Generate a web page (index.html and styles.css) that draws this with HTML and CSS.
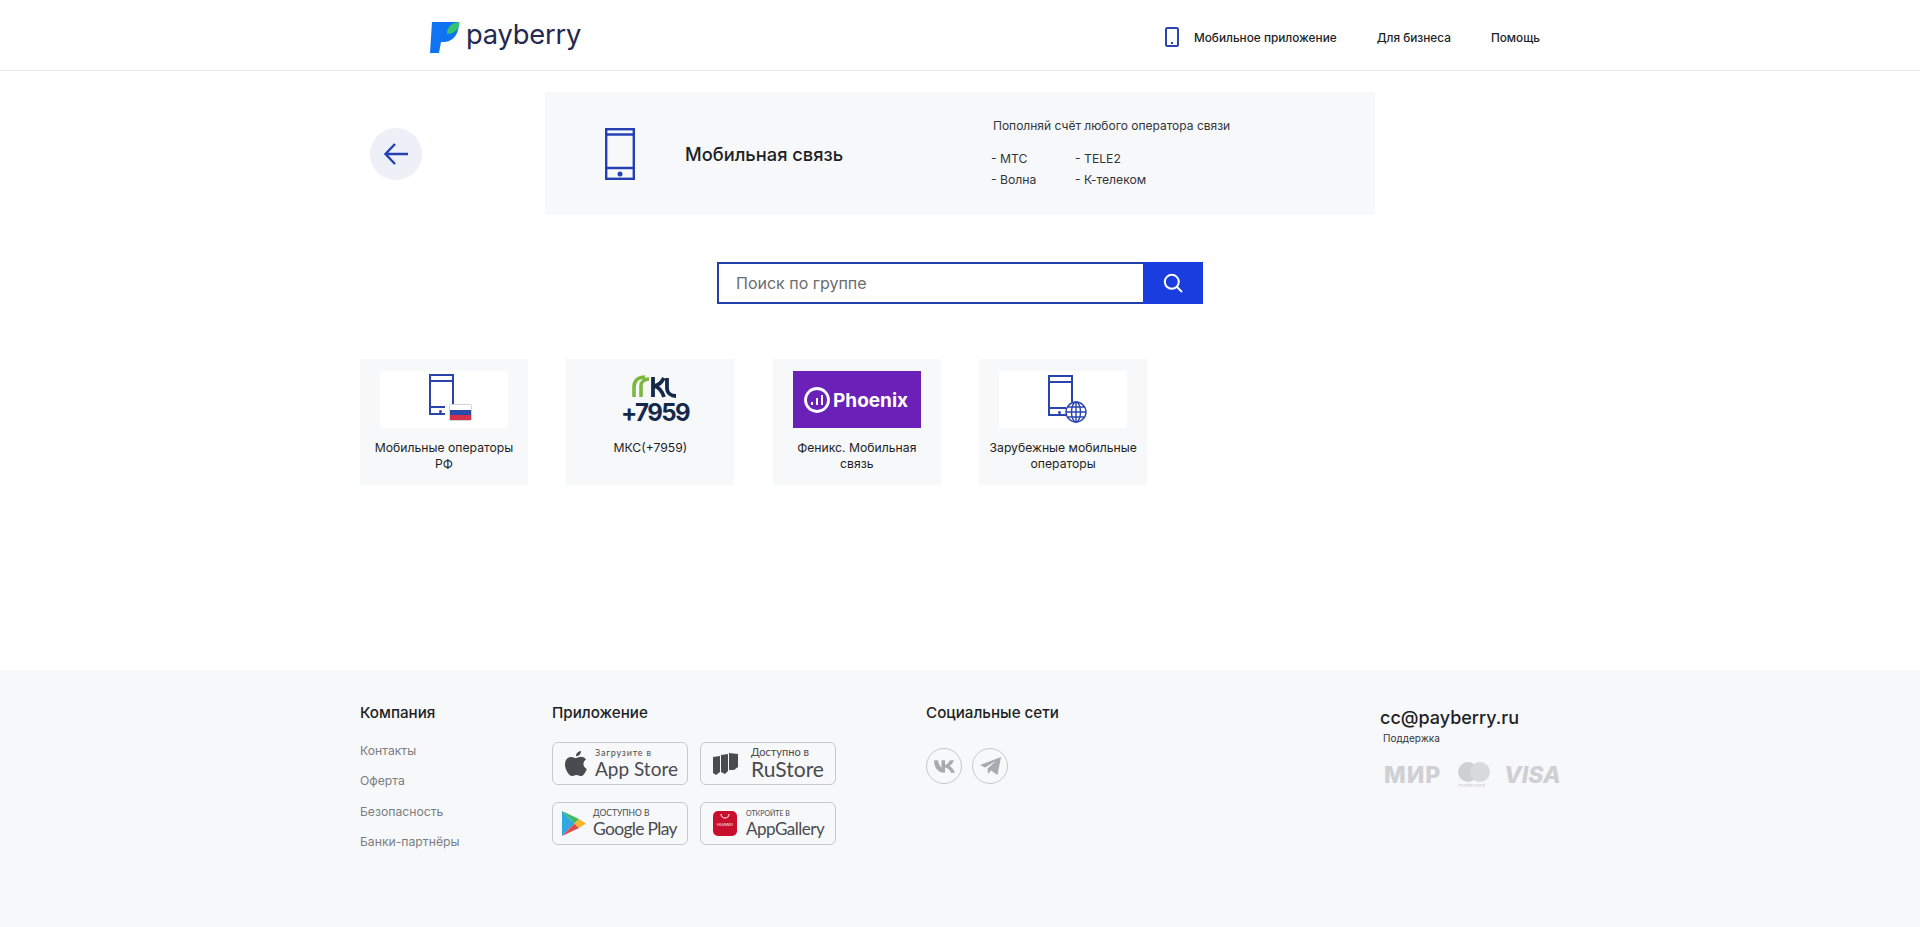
FILE: index.html
```html
<!DOCTYPE html>
<html lang="ru">
<head>
<meta charset="utf-8">
<title>Payberry</title>
<link rel="stylesheet" href="styles.css">
</head>
<body>
<header class="header">
  <div class="wrap header-row">
    <a class="logo">
      <svg class="logo-mark" viewBox="0 0 30 31" width="30" height="31">
        <path d="M2 0H29C29 10 25 19 15 20H11L9 31H0Z" fill="#0f74f2"/>
        <path d="M17 12C17 5 21 1 29.500 0C29.500 6 25 12 17 12Z" fill="#35c46f"/>
      </svg>
      <span class="logo-text">payberry</span>
    </a>
    <nav class="nav">
      <a class="nav-app">
        <svg width="14" height="20" viewBox="0 0 14 20"><rect x="1" y="1" width="12" height="18" rx="1.500" class="ln"/><rect x="6" y="15" width="2" height="2" class="dot"/></svg>
        Мобильное приложение
      </a>
      <a>Для бизнеса</a>
      <a>Помощь</a>
    </nav>
  </div>
</header>

<main class="wrap main">
  <section class="top">
    <a class="back">
      <svg width="26" height="24" viewBox="0 0 26 24"><path d="M25 12H3M12 2 2.500 12l9.500 10" class="ln-b"/></svg>
    </a>
    <div class="banner">
      <svg class="banner-icon" width="30" height="52" viewBox="0 0 30 52"><rect x="1.200" y="1.200" width="27.600" height="49.600" class="ln-b"/><path d="M1 6.500H29M1 40H29" class="ln-b"/><rect x="12.500" y="43.500" width="5" height="5" rx="2.500" class="dot"/></svg>
      <h1 class="banner-title">Мобильная связь</h1>
      <div class="banner-info">
        <p class="banner-lead">Пополняй счёт любого оператора связи</p>
        <ul class="banner-list">
          <li>- МТС</li><li>- TELE2</li><li>- Волна</li><li>- К-телеком</li>
        </ul>
      </div>
    </div>
  </section>

  <form class="search">
    <div class="search-field">Поиск по группе</div>
    <div class="search-btn">
      <svg width="20" height="20" viewBox="0 0 20 20"><circle cx="8.800" cy="8.800" r="7" class="ln-w"/><path d="m14 14 5 5" class="ln-w"/></svg>
    </div>
  </form>

  <section class="cards">
    <a class="card">
      <svg class="card-img" viewBox="1 0 128 57">
        <rect x="1" width="128" height="57" fill="#fff"/>
        <path d="M66 43H51V4H74V33M51 10H74M51 36H66" class="ln"/>
        <rect x="60" y="39" width="3" height="3" rx="1.500" class="dot"/>
        <rect x="70" y="33" width="23" height="17" rx="2" fill="#d4d4d6"/>
        <rect x="71" y="34" width="21" height="5" fill="#fff"/>
        <rect x="71" y="39" width="21" height="5" fill="#2a4aa8"/>
        <rect x="71" y="44" width="21" height="5" fill="#d5304a"/>
      </svg>
      <span class="card-name">Мобильные операторы РФ</span>
    </a>
    <a class="card">
      <svg class="card-img" viewBox="1 0 128 57">
        <path d="M49 26V16C49 9 54 6 60 6M56 26V15C56 11 59 8 64 8" fill="none" stroke="#7cb83f" stroke-width="3.600"/>
        <path d="M68 6V26M79 7C76 12 74 14 69 15C74 16 77 20 79 26M91 25C86 25 82 22 82 17V7" fill="none" stroke="#14294a" stroke-width="3.800"/>
        <text class="mks-num" x="70" y="50">+7959</text>
      </svg>
      <span class="card-name">МКС(+7959)</span>
    </a>
    <a class="card">
      <svg class="card-img" viewBox="1 0 128 57">
        <rect x="1" width="128" height="57" fill="#6b21b8"/>
        <circle cx="25" cy="29" r="11.500" fill="none" stroke="#fff" stroke-width="2.800"/>
        <path d="M20 31V34M25 27V34M30 24V34" stroke="#fff" stroke-width="2"/>
        <text class="phx" x="41" y="36">Phoenix</text>
      </svg>
      <span class="card-name">Феникс. Мобильная связь</span>
    </a>
    <a class="card">
      <svg class="card-img" viewBox="1 0 128 57">
        <rect x="1" width="128" height="57" fill="#fff"/>
        <path d="M68 44H51V5H74V31M51 11H74M51 37H68" class="ln"/>
        <rect x="60" y="40" width="3" height="3" rx="1.500" class="dot"/>
        <g class="ln-g">
          <circle cx="78" cy="41" r="10"/>
          <ellipse cx="78" cy="41" rx="4.500" ry="10"/>
          <path d="M78 31V51M68 41H88M69.500 36H86.500M69.500 46H86.500"/>
        </g>
      </svg>
      <span class="card-name">Зарубежные мобильные операторы</span>
    </a>
  </section>
</main>

<footer class="footer">
  <div class="wrap footer-grid">
    <div>
      <h3 class="foot-title">Компания</h3>
      <ul class="foot-links">
        <li>Контакты</li><li>Оферта</li><li>Безопасность</li><li>Банки-партнёры</li>
      </ul>
    </div>
    <div>
      <h3 class="foot-title">Приложение</h3>
      <div class="stores">
        <a class="store">
          <svg class="ic-apple" width="22" height="26" viewBox="0 0 22 26"><path d="M16 0c.2 2.500-2 5.500-5 5.300C10.700 2.800 13 .3 16 0ZM11.200 7c1.200 0 2.600-1.200 4.800-1.200 1.500 0 3.800.7 5 2.800-3.800 2.300-3.200 7.600.8 9.300-1.200 3-3.400 7.100-5.800 7.100-1.700 0-2.500-1.100-4.500-1.100s-2.900 1.100-4.400 1.100C4 25 0 18.500 0 13.500 0 8.500 3 5.900 6 5.900 8 5.900 10 7 11.200 7Z" fill="#4a4b4f"/></svg>
          <span class="store-txt"><small class="s-as">Загрузите в</small><b class="b-as">App Store</b></span>
        </a>
        <a class="store">
          <svg class="ic-ru" width="25" height="22" viewBox="0 0 25 22"><path d="M0 4 7 3V19L3 22 0 20ZM8 2 15 1V18L12 21 8 19ZM16 0 25 1V14L21 17H16Z" fill="#4a4b4f"/></svg>
          <span class="store-txt"><small class="s-ru">Доступно в</small><b class="b-ru">RuStore</b></span>
        </a>
        <a class="store">
          <svg class="ic-gp" width="24" height="25" viewBox="0 0 24 25"><path d="M0 0V25L12.500 12.500Z" fill="#2fa9e0"/><path d="M0 0 12.500 12.500 17 8Z" fill="#3cba6a"/><path d="M0 25 12.500 12.500 17 17Z" fill="#e2474a"/><path d="M17 8 24 12.500 17 17 12.500 12.500Z" fill="#f7b52b"/></svg>
          <span class="store-txt"><small class="s-gp">ДОСТУПНО В</small><b class="b-gp">Google Play</b></span>
        </a>
        <a class="store">
          <span class="ic-hw"><svg width="24" height="10" viewBox="0 0 24 10"><path d="M8 3c0 3 2 4 4 4s4-1 4-4" fill="none" stroke="#fff" stroke-width="1"/></svg><i class="hw-t">HUAWEI</i></span>
          <span class="store-txt"><small class="s-ag">ОТКРОЙТЕ В</small><b class="b-ag">AppGallery</b></span>
        </a>
      </div>
    </div>
    <div>
      <h3 class="foot-title">Социальные сети</h3>
      <div class="socials">
        <a class="social"><svg width="21" height="13" viewBox="0 0 21 13"><path d="M0 .3H4C4.400 3 5.500 6 7.500 7.500V.3H11V5C13 4.500 15 2.500 16 .3H20C19.300 3 17 5 15.500 6 17.500 7 19.500 9 21 12.700H17C16 10 14 8 11 7.500V12.700H10C4 12.700.3 8 0 .3Z" fill="#a9abaf"/></svg></a>
        <a class="social"><svg width="21" height="18" viewBox="0 0 21 18"><path d="M0 8 21 0 17.500 18 11 13.500 8 17 7.500 11.500 16 4 5 10.500Z" fill="#a9abaf"/></svg></a>
      </div>
    </div>
    <div class="foot-contact">
      <div class="email">cc@payberry.ru</div>
      <div class="support">Поддержка</div>
      <div class="pays">
        <span class="mir">МИР</span>
        <span class="mc"><i class="mc-a"></i><i class="mc-b"></i><em class="mc-t">mastercard</em></span>
        <span class="visa">VISA</span>
      </div>
    </div>
  </div>
</footer>
</body>
</html>
```
FILE: styles.css
```css
* { box-sizing: border-box; }
html, body { margin: 0; height: 100%; }
body {
  font-family: Inter, "Noto Sans", sans-serif;
  color: #1d1f24;
  background: #fff;
  min-height: 927px;
  display: flex;
  flex-direction: column;
  overflow: hidden;
}
a { color: inherit; text-decoration: none; }
ul { list-style: none; margin: 0; padding: 0; }
h1, h3, p { margin: 0; }
.wrap { width: 1200px; margin: 0 auto; }

.ln { fill: none; stroke: #2a44ae; stroke-width: 2; }
.ln-b { fill: none; stroke: #2640b4; stroke-width: 2.400; }
.ln-w { fill: none; stroke: #fff; stroke-width: 2; }
.ln-g { fill: none; stroke: #2a44ae; stroke-width: 1.400; }
.dot { fill: #2a44ae; }

.header { height: 71px; border-bottom: 1px solid #e6e7e9; }
.header-row { display: flex; align-items: center; justify-content: space-between; height: 70px; padding: 0 20px 0 70px; }
.logo { display: flex; align-items: center; gap: 6px; }
.logo-mark { display: block; margin-top: 5px; }
.logo-text { font-size: 27.300px; line-height: 36px; color: #24274f; letter-spacing: -.2px; }
.nav { display: flex; align-items: center; gap: 40px; font-size: 11.800px; font-weight: 500; padding-top: 5px; }
.nav-app { display: flex; align-items: center; gap: 15px; }
.nav-app svg { display: block; margin-top: -2px; }

.main { flex: 1; }
.top { display: flex; align-items: center; padding: 21px 0 0 10px; }
.back { width: 52px; height: 52px; border-radius: 50%; background: #edf0f7; display: flex; align-items: center; justify-content: center; margin-right: 123px; }
.banner { width: 830px; height: 123px; background: #f7f8fa; display: flex; align-items: center; padding-left: 60px; }
.banner-icon { flex: none; margin-right: 50px; }
.banner-title { font-size: 18.300px; font-weight: 500; width: 306px; color: #1d1f24; }
.banner-lead { font-size: 12px; line-height: 18px; padding-left: 2px; color: #33353a; margin-bottom: 13px; }
.banner-list { display: grid; grid-template-columns: 84px 1fr; font-size: 12.200px; line-height: 21px; color: #33353a; }

.search { display: flex; width: 486px; height: 42px; margin: 47px 0 0 357px; }
.search-field { flex: 1; border: 2px solid #2340a8; border-right: 0; padding-left: 17px; font-size: 16px; line-height: 39px; color: #6b6d72; }
.search-btn { width: 60px; background: #1a3de0; display: flex; align-items: center; justify-content: center; }

.cards { display: flex; gap: 38.400px; margin-top: 55px; }
.card { width: 168px; height: 126px; background: #f7f8fa; display: flex; flex-direction: column; align-items: center; padding-top: 12px; }
.card-img { width: 128px; height: 57px; display: block; flex: none; }
.card-name { margin-top: 12px; padding: 0 10px; font-size: 12.200px; line-height: 16px; text-align: center; color: #1d1f24; }
.mks-num { font-size: 24px; font-weight: 700; fill: #14294a; text-anchor: middle; letter-spacing: -1.600px; }
.phx { font-size: 19px; font-weight: 700; fill: #fff; }

.footer { height: 257px; background: #f7f8fa; flex: none; }
.footer-grid { display: grid; grid-template-columns: 192px 374px 454px 1fr; padding-top: 31px; }
.foot-title { font-size: 15.200px; font-weight: 500; line-height: 24px; color: #1d1f24; }
.foot-links { margin-top: 11px; font-size: 12.200px; line-height: 30.300px; color: #7b7d82; }
.stores { display: grid; grid-template-columns: 136px 136px; gap: 17px 12px; margin-top: 17px; }
.store { height: 43px; border: 1px solid #c6c8cb; border-radius: 6px; display: flex; align-items: center; position: relative; color: #4a4b4f; }
.store svg { flex: none; }
.store-txt { display: flex; flex-direction: column; font-family: Lato, "Open Sans", sans-serif; }
.store-txt small, .store-txt b { font-weight: 400; display: block; white-space: nowrap; }
.ic-apple { margin: 0 8px 0 12px; }
.ic-ru { margin: 0 13px 0 12px; }
.ic-gp { margin: 0 7px 0 9px; }
.ic-hw { width: 24px; height: 25px; margin: 0 9px 0 12px; background: #c8102e; border-radius: 5px; display: flex; flex-direction: column; align-items: center; flex: none; overflow: hidden; }
.hw-t { font-size: 4px; line-height: 5px; color: #fff; font-style: normal; margin-top: 1px; }
.s-as { font-size: 9px; line-height: 10px; letter-spacing: .8px; }
.b-as { font-size: 19px; line-height: 21px; }
.s-ru { font-size: 11px; line-height: 11px; }
.b-ru { font-size: 21px; line-height: 24px; }
.s-gp { font-size: 8.500px; line-height: 10px; }
.b-gp { font-size: 17.500px; line-height: 21px; letter-spacing: -.7px; }
.s-ag { font-size: 7px; line-height: 10px; }
.b-ag { font-size: 17px; line-height: 22px; letter-spacing: -.5px; }

.socials { display: flex; gap: 10px; margin-top: 23px; }
.social { width: 36px; height: 36px; border: 1px solid #c6c8cb; border-radius: 50%; display: flex; align-items: center; justify-content: center; }

.email { font-size: 18px; font-weight: 500; line-height: 26px; margin-top: 4px; }
.support { font-size: 10px; line-height: 14px; padding-left: 3px; color: #33353a; }
.pays { display: flex; align-items: center; margin-top: 17px; padding-left: 4px; color: #cfd0d3; }
.mir { font-size: 23px; font-weight: 800; line-height: 24px; width: 74px; letter-spacing: 1px; }
.mc { width: 46px; height: 25px; position: relative; }
.mc-a, .mc-b { position: absolute; top: 0; width: 20px; height: 20px; border-radius: 50%; background: #cfd0d3; }
.mc-a { left: 0; }
.mc-b { left: 12px; background: #d9dadc; }
.mc-t { position: absolute; left: 0; top: 20px; font-size: 5px; line-height: 6px; font-style: normal; }
.visa { font-size: 23px; font-weight: 800; font-style: italic; line-height: 24px; }
```
